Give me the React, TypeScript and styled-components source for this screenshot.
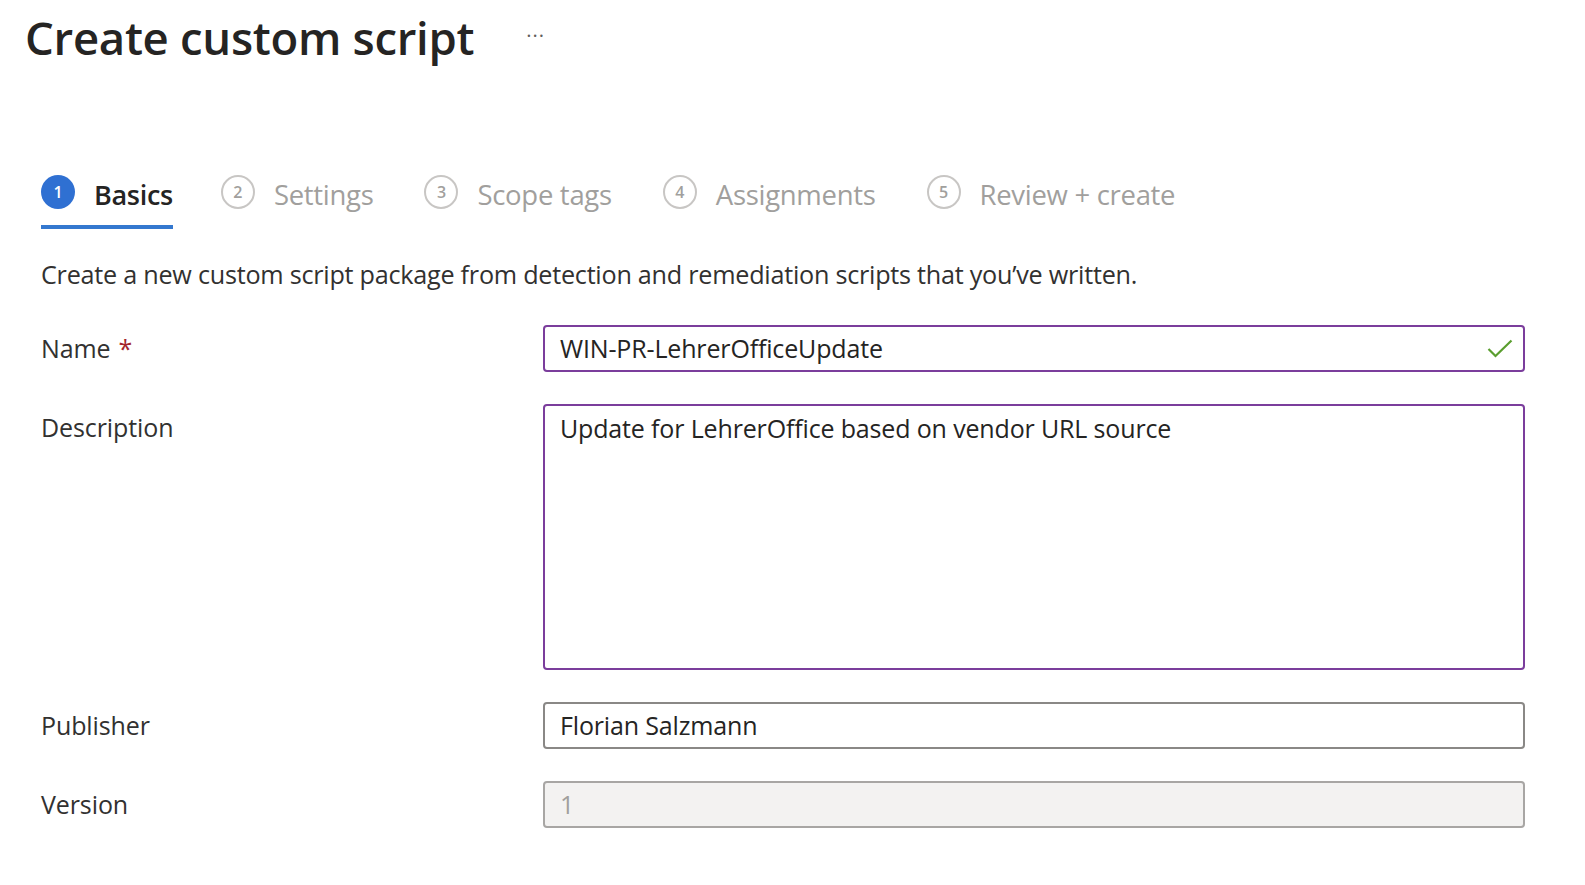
import React from 'react';
import styled, { createGlobalStyle } from 'styled-components';

const GlobalStyle = createGlobalStyle`
  html, body {
    margin: 0;
    padding: 0;
    background: #ffffff;
  }
  body {
    font-family: "Open Sans", "Noto Sans", "Liberation Sans", sans-serif;
    color: #323130;
  }
`;

const Page = styled.div`
  width: 1585px;
  height: 885px;
  box-sizing: border-box;
  padding: 0 60px 0 41px;
  overflow: hidden;
`;

const Header = styled.div`
  display: flex;
  align-items: center;
  gap: 52px;
  height: 74px;
  margin-left: -16px;
`;

const Title = styled.h1`
  margin: 0;
  font-size: 45.5px;
  font-weight: 600;
  color: #252423;
  letter-spacing: -0.3px;
`;

const MoreButton = styled.span`
  font-size: 20px;
  color: #605e5c;
  letter-spacing: 1px;
  margin-top: -4px;
`;

const Steps = styled.div`
  display: flex;
  align-items: flex-end;
  gap: 51px;
  margin-top: 99px;
`;

const Step = styled.div<{ $active?: boolean }>`
  display: flex;
  align-items: center;
  gap: 19px;
  padding-bottom: 15px;
  margin-right: ${({ $active }) => ($active ? '-3px' : '0')};
  border-bottom: 4px solid ${({ $active }) => ($active ? '#3478cf' : 'transparent')};
`;

const StepCircle = styled.span<{ $active?: boolean }>`
  width: 34px;
  height: 34px;
  box-sizing: border-box;
  border-radius: 50%;
  display: flex;
  align-items: center;
  justify-content: center;
  font-size: 16px;
  font-weight: 600;
  color: ${({ $active }) => ($active ? '#ffffff' : '#a19f9d')};
  background: ${({ $active }) => ($active ? '#2f70d2' : 'transparent')};
  border: ${({ $active }) => ($active ? 'none' : '2px solid #c8c6c4')};
`;

const StepLabel = styled.span<{ $active?: boolean }>`
  font-size: ${({ $active }) => ($active ? 27 : 27.5)}px;
  font-weight: ${({ $active }) => ($active ? 600 : 400)};
  color: ${({ $active }) => ($active ? '#252423' : '#a19f9d')};
  letter-spacing: -0.3px;
  position: relative;
  top: 3px;
`;

const Intro = styled.p`
  margin: 28px 0 0;
  font-size: 25.2px;
  color: #323130;
  letter-spacing: -0.25px;
`;

const Form = styled.div`
  display: grid;
  grid-template-columns: 502px 1fr;
  row-gap: 32px;
  margin-top: 34px;
`;

const Label = styled.div`
  font-size: 25px;
  line-height: 47px;
  color: #323130;
  letter-spacing: -0.1px;
`;

const Required = styled.span`
  color: #a4262c;
  margin-left: 8px;
`;

const Field = styled.div<{ $tone?: 'focus' | 'normal' | 'disabled'; $height?: number }>`
  position: relative;
  box-sizing: border-box;
  height: ${({ $height }) => $height ?? 47}px;
  border-radius: 4px;
  border: 2px solid
    ${({ $tone }) => ($tone === 'focus' ? '#7b3d9c' : $tone === 'disabled' ? '#a8a6a4' : '#8a8886')};
  background: ${({ $tone }) => ($tone === 'disabled' ? '#f3f2f1' : '#ffffff')};
  padding: 0 15px;
  display: flex;
  align-items: ${({ $height }) => ($height ? 'flex-start' : 'center')};
  padding-top: ${({ $height }) => ($height ? '3px' : '0')};
`;

const FieldText = styled.span<{ $muted?: boolean }>`
  font-size: 25px;
  line-height: 39px;
  color: ${({ $muted }) => ($muted ? '#a19f9d' : '#252423')};
  letter-spacing: -0.15px;
`;

const CheckMark = styled.svg`
  position: absolute;
  right: 10px;
  top: 50%;
  transform: translateY(-50%);
`;

const steps = ['Basics', 'Settings', 'Scope tags', 'Assignments', 'Review + create'];

export default function App() {
  return (
    <Page>
      <GlobalStyle />
      <Header>
        <Title>Create custom script</Title>
        <MoreButton>···</MoreButton>
      </Header>

      <Steps>
        {steps.map((label, i) => (
          <Step key={label} $active={i === 0}>
            <StepCircle $active={i === 0}>{i + 1}</StepCircle>
            <StepLabel $active={i === 0}>{label}</StepLabel>
          </Step>
        ))}
      </Steps>

      <Intro>Create a new custom script package from detection and remediation scripts that you’ve written.</Intro>

      <Form>
        <Label>
          Name<Required>*</Required>
        </Label>
        <Field $tone="focus">
          <FieldText>WIN-PR-LehrerOfficeUpdate</FieldText>
          <CheckMark width="26" height="20" viewBox="0 0 26 20">
            <polyline points="1.5,10 8.5,17 24.5,1.5" fill="none" stroke="#5a9e2f" strokeWidth="2.2" />
          </CheckMark>
        </Field>

        <Label>Description</Label>
        <Field $tone="focus" $height={266}>
          <FieldText>Update for LehrerOffice based on vendor URL source</FieldText>
        </Field>

        <Label>Publisher</Label>
        <Field $tone="normal">
          <FieldText>Florian Salzmann</FieldText>
        </Field>

        <Label>Version</Label>
        <Field $tone="disabled">
          <FieldText $muted>1</FieldText>
        </Field>
      </Form>
    </Page>
  );
}
